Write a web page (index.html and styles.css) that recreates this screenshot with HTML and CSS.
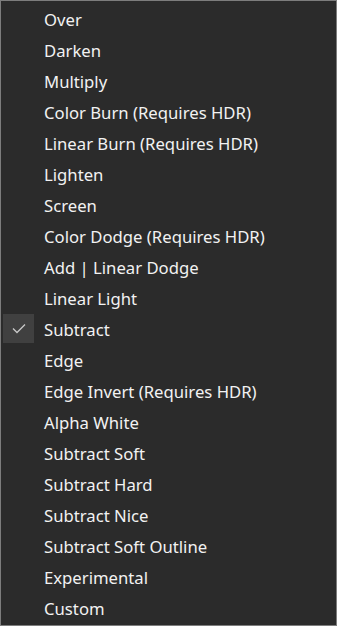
FILE: index.html
```html
<!DOCTYPE html>
<html>
<head>
<meta charset="utf-8">
<link rel="stylesheet" href="styles.css">
</head>
<body>
<div class="menu">
  <div class="item"><span class="label">Over</span></div>
  <div class="item"><span class="label">Darken</span></div>
  <div class="item"><span class="label">Multiply</span></div>
  <div class="item"><span class="label">Color Burn (Requires HDR)</span></div>
  <div class="item"><span class="label">Linear Burn (Requires HDR)</span></div>
  <div class="item"><span class="label">Lighten</span></div>
  <div class="item"><span class="label">Screen</span></div>
  <div class="item"><span class="label">Color Dodge (Requires HDR)</span></div>
  <div class="item"><span class="label">Add | Linear Dodge</span></div>
  <div class="item"><span class="label">Linear Light</span></div>
  <div class="item checked"><span class="check"><svg width="14" height="11" viewBox="0 0 14 11"><path d="M1 5.5 L5 9.5 L13 1.5" fill="none" stroke="#c8c8c8" stroke-width="1.3"/></svg></span><span class="label">Subtract</span></div>
  <div class="item"><span class="label">Edge</span></div>
  <div class="item"><span class="label">Edge Invert (Requires HDR)</span></div>
  <div class="item"><span class="label">Alpha White</span></div>
  <div class="item"><span class="label">Subtract Soft</span></div>
  <div class="item"><span class="label">Subtract Hard</span></div>
  <div class="item"><span class="label">Subtract Nice</span></div>
  <div class="item"><span class="label">Subtract Soft Outline</span></div>
  <div class="item"><span class="label">Experimental</span></div>
  <div class="item"><span class="label">Custom</span></div>
</div>
</body>
</html>
```
FILE: styles.css
```css
html, body {
  margin: 0;
  padding: 0;
  background: #2b2b2b;
}
.menu {
  box-sizing: border-box;
  width: 337px;
  height: 626px;
  border: 1px solid #7d7d7d;
  background: #2b2b2b;
  padding: 3px 0 0 2px;
  font-family: "Noto Sans", sans-serif;
  font-size: 16.7px;
  color: #f2f2f2;
}
.item {
  height: 31px;
  display: flex;
  align-items: center;
  position: relative;
}
.label {
  margin-left: 41px;
  line-height: 20px;
}
.check {
  position: absolute;
  left: 0;
  top: 0;
  width: 31px;
  height: 29px;
  background: #404040;
  display: flex;
  align-items: center;
  justify-content: center;
}
```
